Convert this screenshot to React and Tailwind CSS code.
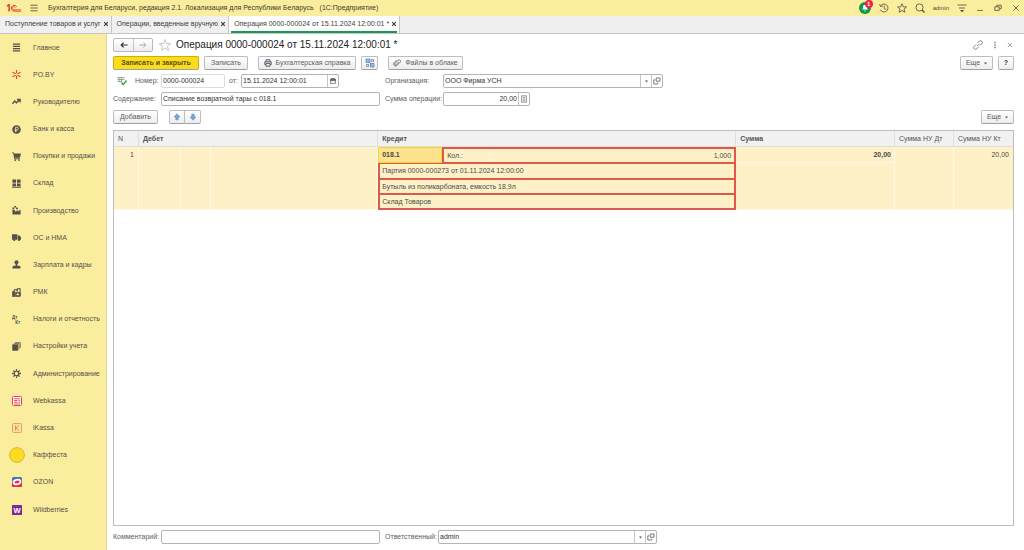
import clsx from 'clsx'

const Svg = ({ size = 'w-2.5 h-2.5', className, children, ...rest }) => (
  <svg viewBox="0 0 20 20" className={clsx(size, 'shrink-0', className)} fill="none" stroke="currentColor" strokeWidth="1.6" aria-hidden="true" {...rest}>
    {children}
  </svg>
)

const icons = {
  main: <g stroke="none" fill="currentColor"><path d="M2 1h16v3H2zM2 6h16v3H2zM2 11h16v3H2zM2 16h16v3H2z" /></g>,
  poby: (
    <g stroke="#e0432f" strokeWidth="2.4">
      <path d="M10 0v7M10 13v7M1 5l7 3.500M19 5l-7 3.500M1 15l7-3.500M19 15l-7-3.500" />
    </g>
  ),
  chart: <path d="M1 15l5-6 4 4 7-7M11 5.5h7V12" strokeWidth="3" />,
  bank: (
    <g>
      <circle cx="10" cy="10" r="9.5" fill="currentColor" stroke="none" />
      <path d="M8 15.5V5h3.2a2.8 2.8 0 0 1 0 5.8H6M6 13.2h5.5" stroke="#fbed9e" strokeWidth="1.8" />
    </g>
  ),
  cart: (
    <g fill="currentColor" stroke="none">
      <path d="M0 1h4l.8 2.500H20l-2.400 9H6.400l.5 1.500H17.500v2H5.300L2.600 3H0z" />
      <circle cx="7.2" cy="18" r="2" />
      <circle cx="15.500" cy="18" r="2" />
    </g>
  ),
  stock: (
    <g fill="currentColor" stroke="none">
      <path d="M1 1h8v7.500H1zM11 1h8v7.500h-8zM1 9.800h8V16H1zM11 9.800h8V16h-8zM0 17h20v2.500H0z" />
    </g>
  ),
  factory: (
    <g fill="currentColor" stroke="none">
      <path d="M1 19V9h5l1.500 3.500L13 9v3.500L19 8v11z" />
      <path d="M1 3.500h4V7.500H1zM5 0h4v3.500H5zM9 3.500h4V7H9z" />
    </g>
  ),
  truck: (
    <g fill="currentColor" stroke="none">
      <path d="M0 3h12v12H0zM13 5.500h4l3 4V15h-7z" />
      <circle cx="5" cy="15.500" r="2.500" />
      <circle cx="15.500" cy="15.500" r="2.500" />
    </g>
  ),
  person: (
    <g fill="currentColor" stroke="none">
      <circle cx="10" cy="5" r="4.500" />
      <path d="M8 8h4v5h5l2 2.500V19H1v-3.500L3 13h5z" />
    </g>
  ),
  rmk: (
    <g>
      <path d="M1 8h5.500v11H1zM8 10h10v9H8z" fill="currentColor" />
      <path d="M5 8V4h6v4M12 7V1.800h6V18" strokeWidth="2.400" />
      <path d="M10 12.500h5.500v3.500H10z" fill="#fbed9e" stroke="none" />
    </g>
  ),
  tax: (
    <g fill="currentColor" stroke="none" className="font-bold">
      <text x="0" y="9" fontSize="10">Дт</text>
      <text x="7" y="19" fontSize="10">Кт</text>
    </g>
  ),
  books: (
    <g>
      <path d="M1.500 6h11.500v12.500h-11.500z" fill="currentColor" />
      <path d="M4 3.500h11.500v12.500M7 1.300h11.500v12" strokeWidth="1.600" />
    </g>
  ),
  gear: (
    <g>
      <circle cx="10" cy="10" r="5" strokeWidth="2.600" />
      <path d="M10 0v4M10 16v4M0 10h4M16 10h4M3 3l3 3M14 14l3 3M17 3l-3 3M6 14l-3 3" strokeWidth="2.800" />
    </g>
  ),
  webkassa: (
    <g stroke="#ee3c50">
      <rect x="1" y="1" width="18" height="18" rx="2" fill="#fff" strokeWidth="2" />
      <path d="M4 5.500h12M4 9h7M4 12.500h7M4 16h12M13 9h3M13 12.500h3" strokeWidth="1.800" />
    </g>
  ),
  ikassa: (
    <g>
      <rect x="1" y="1" width="18" height="18" rx="2" stroke="#e58a5e" strokeWidth="1.600" fill="#fbe39a" />
      <path d="M7 5v10M13.500 5L8 10l5.500 5" stroke="#e07a52" />
    </g>
  ),
  kaffesta: <circle cx="10" cy="10" r="9.200" fill="#fbdc1f" stroke="#d3a52a" strokeWidth="1" />,
  ozon: (
    <g>
      <rect width="20" height="20" rx="3" fill="#4a6fae" stroke="none" />
      <path d="M0 15l20-4v7a2 2 0 0 1-2 2H2a2 2 0 0 1-2-2z" fill="#ee2b48" stroke="none" />
      <ellipse cx="10" cy="10" rx="7" ry="4.500" transform="rotate(-12 10 10)" stroke="#fff" strokeWidth="3.500" fill="#ee2b48" />
    </g>
  ),
  wb: (
    <g>
      <rect width="20" height="20" rx="1" fill="#7d2a93" stroke="none" />
      <text x="10" y="15.500" fontSize="15" textAnchor="middle" fill="#fff" stroke="none" className="font-bold">W</text>
    </g>
  ),
}

const sections = [
  { icon: 'main', label: 'Главное' },
  { icon: 'poby', label: 'PO.BY' },
  { icon: 'chart', label: 'Руководителю' },
  { icon: 'bank', label: 'Банк и касса' },
  { icon: 'cart', label: 'Покупки и продажи' },
  { icon: 'stock', label: 'Склад' },
  { icon: 'factory', label: 'Производство' },
  { icon: 'truck', label: 'ОС и НМА' },
  { icon: 'person', label: 'Зарплата и кадры' },
  { icon: 'rmk', label: 'РМК' },
  { icon: 'tax', label: 'Налоги и отчетность' },
  { icon: 'books', label: 'Настройки учета' },
  { icon: 'gear', label: 'Администрирование' },
  { icon: 'webkassa', label: 'Webkassa', size: 'w-2.5 h-2.5' },
  { icon: 'ikassa', label: 'iKassa', size: 'w-2.5 h-2.5' },
  { icon: 'kaffesta', label: 'Каффеста', size: 'w-4 h-4' },
  { icon: 'ozon', label: 'OZON', size: 'w-2.5 h-2.5' },
  { icon: 'wb', label: 'Wildberries', size: 'w-2.5 h-2.5' },
]

const tabs = [
  { label: 'Поступление товаров и услуг' },
  { label: 'Операции, введенные вручную' },
  { label: 'Операция 0000-000024 от 15.11.2024 12:00:01 *', active: true },
]

const Caret = () => (
  <svg viewBox="0 0 6 4" className="w-[3px] h-[3px] shrink-0" fill="currentColor" aria-hidden="true">
    <path d="M0 0h6L3 4z" />
  </svg>
)

const OpenIcon = () => (
  <Svg size="w-2 h-2">
    <path d="M8 2.500h9.500v8H8zM5 7H2v10.500h10V14" strokeWidth="2" />
  </Svg>
)

const Button = ({ className, children, ...rest }) => (
  <button
    type="button"
    className={clsx('h-3.5 shrink-0 flex items-center justify-center gap-1 border border-[#bdbdbd] border-b-[#a0a0a0] rounded-[2px] bg-gradient-to-b from-white to-[#ededed] whitespace-nowrap', className)}
    {...rest}
  >
    {children}
  </button>
)

const Field = ({ id, label, labelClass, className, children, boxClass, inputClass, ...rest }) => (
  <div className={clsx('flex items-center', className)}>
    <label htmlFor={id} className={clsx('shrink-0 whitespace-nowrap', labelClass)}>{label}</label>
    <div className={clsx('h-3.5 flex items-stretch border border-[#b4b4b4] rounded-[2px] bg-white min-w-0', boxClass)}>
      <input id={id} className={clsx('flex-1 w-full min-w-0 px-px outline-none text-[#333]', inputClass)} {...rest} />
      {children}
    </div>
  </div>
)

const FieldButton = ({ label, children }) => (
  <button type="button" aria-label={label} className="w-[11px] shrink-0 flex items-center justify-center border-l border-[#c4c4c4]">
    {children}
  </button>
)

const WindowButton = ({ label, children }) => (
  <button type="button" aria-label={label} className="w-2.5 flex justify-center">
    <Svg size="w-2 h-2">{children}</Svg>
  </button>
)

const TitleBar = () => (
  <header className="h-4 shrink-0 flex items-center bg-[#fbed9e] pl-1.5 pr-[3px] text-[#4d4a3c]">
    <svg viewBox="0 0 34 18" className="w-4 h-2 shrink-0" fill="none" stroke="#dc2a20" strokeWidth="2" aria-label="1C">
      <path d="M1 5l5-3.500V17M3.500 7v-.5" strokeWidth="3" />
      <path d="M23 6a6.500 6.500 0 1 0-6 10h16" />
      <path d="M20 8a3.500 3.500 0 1 0-3.500 5H33" strokeWidth="1.600" />
    </svg>
    <button type="button" aria-label="Меню" className="ml-2">
      <Svg size="w-2 h-2"><path d="M1 3h18M1 10h18M1 17h18" strokeWidth="2" /></Svg>
    </button>
    <h1 className="ml-[10px] flex-1 whitespace-nowrap text-[#3d3a2c]">
      Бухгалтерия для Беларуси, редакция 2.1. Локализация для Республики Беларусь <span className="ml-1">(1С:Предприятие)</span>
    </h1>
    <div className="flex items-center gap-2">
      <button type="button" aria-label="Уведомления" className="relative w-3 h-3 rounded-full bg-[#0f9650] flex items-center justify-center text-white">
        <Svg size="w-2 h-2"><path d="M2 14c3-2 3-4 3-7a5 5 0 0 1 10 0c0 3 0 5 3 7zM8 16h4v2H8z" fill="#fff" stroke="none" /></Svg>
        <span className="absolute -top-0.5 -right-0.5 w-2 h-2 rounded-full bg-[#f0243c] text-[6px] leading-[8px] font-bold">1</span>
      </button>
      <button type="button" aria-label="История">
        <Svg size="w-2.5 h-2.5"><path d="M3 6a8 8 0 1 1-.5 7M1 2.500L3 7l4.500-1M10.500 5v6l4 2" /></Svg>
      </button>
      <button type="button" aria-label="Избранное">
        <Svg size="w-2.5 h-2.5"><path d="M10 1.500l2.500 6 6.500.5-5 4.200 1.600 6.300-5.600-3.400-5.600 3.400L6 12.200 1 8l6.500-.5z" /></Svg>
      </button>
      <button type="button" aria-label="Поиск">
        <Svg size="w-2.5 h-2.5"><circle cx="9" cy="9" r="7.200" /><path d="M14 14l5 5" strokeWidth="2.400" /></Svg>
      </button>
      <a href="#user" className="text-[6px]">admin</a>
      <button type="button" aria-label="Настройки">
        <Svg size="w-2.5 h-2.5"><path d="M1 4h18M4 10h12" /><path d="M6 14h8l-4 4.500z" fill="currentColor" stroke="none" /></Svg>
      </button>
      <WindowButton label="Свернуть"><path d="M3 16h14" strokeWidth="2" /></WindowButton>
      <WindowButton label="Развернуть"><path d="M7 6V3h11v9h-4M2 7h11v9H2z" strokeWidth="2" /></WindowButton>
      <WindowButton label="Закрыть"><path d="M3 3l14 14M17 3L3 17" strokeWidth="2" /></WindowButton>
    </div>
  </header>
)

const TabBar = () => (
  <nav className="h-[18px] shrink-0 flex bg-[#f0f0f0] border-b border-[#c6c6c6]">
    {tabs.map((tab) => (
      <div key={tab.label} className={clsx('flex border-r border-[#c6c6c6] px-0.5', tab.active && 'bg-white')}>
        <div className={clsx('flex items-center gap-0.5 pl-[3px] border-b-2', tab.active ? 'border-[#159a54]' : 'border-transparent')}>
          <a href="#tab" className="whitespace-nowrap text-[#404040]">{tab.label}</a>
          <button type="button" aria-label="Закрыть вкладку" className="text-[#333]">
            <Svg size="w-1.5 h-1.5"><path d="M4 4l12 12M16 4L4 16" strokeWidth="3.400" /></Svg>
          </button>
        </div>
      </div>
    ))}
  </nav>
)

const Sidebar = () => (
  <aside className="w-[107px] shrink-0 flex flex-col bg-[#fbed9e] border-r border-[#e6d98c] pb-[27px] text-[#55504a]">
    {sections.map((item) => (
      <a key={item.label} href="#section" className="flex-1 flex items-center">
        <span className="w-[33px] flex justify-center">
          <Svg size={item.size || 'w-[9px] h-[9px]'}>{icons[item.icon]}</Svg>
        </span>
        <span className="whitespace-nowrap">{item.label}</span>
      </a>
    ))}
  </aside>
)

const cell = 'border-r border-b border-[#fff9e6]'

const EntriesTable = () => (
  <div className="flex-1 border border-[#bdbdbd] bg-white">
    <table className="w-full table-fixed border-separate border-spacing-0 text-left text-[#4a4a4a]">
      <colgroup>
        <col className="w-[25px]" />
        <col className="w-[42px]" />
        <col className="w-[30px]" />
        <col className="w-[18.600%]" />
        <col className="w-[64px]" />
        <col className="w-[32.700%]" />
        <col />
        <col className="w-[59px]" />
        <col className="w-[59px]" />
      </colgroup>
      <thead>
        <tr className="h-4 bg-[#f1f1f1] text-[#555]">
          <th className="border-r border-b border-[#dedede] px-1 font-normal">N</th>
          <th colSpan={3} className="border-r border-b border-[#dedede] px-1">Дебет</th>
          <th colSpan={2} className="border-r border-b border-[#dedede] px-1">Кредит</th>
          <th className="border-r border-b border-[#dedede] px-1">Сумма</th>
          <th className="border-r border-b border-[#dedede] px-1 font-normal whitespace-nowrap">Сумма НУ Дт</th>
          <th className="border-b border-[#dedede] px-1 font-normal whitespace-nowrap">Сумма НУ Кт</th>
        </tr>
      </thead>
      <tbody className="bg-[#fef1c8]">
        <tr className="h-4">
          <td rowSpan={4} className={clsx(cell, 'px-1 pt-[3px] text-right align-top')}>1</td>
          <td rowSpan={4} className={cell} />
          <td rowSpan={4} className={cell} />
          <td rowSpan={4} className={cell} />
          <td className="border border-[#f5d62e] bg-[#fde38e] px-[3px] font-bold">018.1</td>
          <td className="h-4 border-2 border-b border-[#da5a4c] p-0">
            <div className="flex items-center">
              <span className="w-[46px] border-r border-[#fff6dc] pl-[3px]">Кол.:</span>
              <span className="flex-1 pr-[3px] text-right">1,000</span>
            </div>
          </td>
          <td className={clsx(cell, 'px-[3px] text-right font-bold')}>20,00</td>
          <td rowSpan={4} className={cell} />
          <td rowSpan={4} className="border-b border-[#fff9e6] px-1 pt-[3px] text-right align-top">20,00</td>
        </tr>
        <tr className="h-4">
          <td colSpan={2} className="border-x-2 border-y border-[#da5a4c] px-0.5">Партия 0000-000273 от 01.11.2024 12:00:00</td>
          <td rowSpan={3} className={cell} />
        </tr>
        <tr className="h-[15px]">
          <td colSpan={2} className="border-x-2 border-y border-[#da5a4c] px-0.5">Бутыль из поликарбоната, емкость 18,9л</td>
        </tr>
        <tr className="h-4">
          <td colSpan={2} className="border-2 border-t border-[#da5a4c] px-0.5">Склад Товаров</td>
        </tr>
      </tbody>
    </table>
  </div>
)

const Document = () => (
  <main className="flex-1 min-w-0 flex flex-col pt-1 pb-1.5 pl-1.5 pr-2.5 text-[#5c5c5c]">
    <div className="flex items-center h-3.5">
      <div className="h-3.5 flex border border-[#b9b9b9] rounded-[2px] bg-gradient-to-b from-white to-[#ededed]">
        <button type="button" aria-label="Назад" className="w-[19px] flex items-center justify-center text-[#333]">
          <Svg size="w-2 h-2"><path d="M19 10H3M9 4l-6 6 6 6" strokeWidth="3" /></Svg>
        </button>
        <button type="button" aria-label="Вперед" className="w-[19px] flex items-center justify-center border-l border-[#c9c9c9] text-[#a5a5a5]">
          <Svg size="w-2 h-2"><path d="M1 10h16M11 4l6 6-6 6" strokeWidth="2.400" /></Svg>
        </button>
      </div>
      <button type="button" aria-label="В избранное" className="ml-1.5 text-[#b0b0b0]">
        <Svg size="w-3 h-3"><path d="M10 1l2.500 6.500 7 .3-5.500 4.300 2 6.900-6-4-6 4 2-6.900L.5 7.800l7-.3z" strokeWidth="1.200" /></Svg>
      </button>
      <h2 className="ml-[5px] flex-1 text-[10px] whitespace-nowrap text-[#222]">Операция 0000-000024 от 15.11.2024 12:00:01 *</h2>
      <div className="flex items-center gap-2 pr-px text-[#666]">
        <button type="button" aria-label="Ссылка">
          <Svg size="w-2.5 h-2.5"><path d="M8 12.500l5-5M9 6l3.500-3.500a3.500 3.500 0 0 1 5 5L14 11M11 14l-3.500 3.500a3.500 3.500 0 0 1-5-5L6 9" /></Svg>
        </button>
        <button type="button" aria-label="Еще действия">
          <Svg size="w-2 h-2"><path d="M8.500 2h3v3.500h-3zM8.500 8.200h3v3.500h-3zM8.500 14.500h3V18h-3z" fill="currentColor" stroke="none" /></Svg>
        </button>
        <button type="button" aria-label="Закрыть"><Svg size="w-1.5 h-1.5"><path d="M3 3l14 14M17 3L3 17" strokeWidth="2" /></Svg></button>
      </div>
    </div>

    {/* Command bar */}
    <div className="mt-1 flex items-center gap-[5px]">
      <Button className="w-[86px] font-bold text-[#57501f] border-[#d1ad00] bg-none bg-[#fbdc1b]">Записать и закрыть</Button>
      <Button className="w-11">Записать</Button>
      <Button className="ml-[5px] w-[98px]">
        <Svg size="w-2 h-2" className="text-[#4d5866]"><path d="M5 7V2h10v5M5 14H2V7h16v7h-3M5 11h10v7H5z" strokeWidth="2.400" /></Svg>
        Бухгалтерская справка
      </Button>
      <Button className="w-[17px] text-[#5b87b8]" aria-label="Структура подчиненности">
        <Svg size="w-2.5 h-2.5"><path d="M2 2h8v7H2zM11 11h7v7h-7z" fill="#9dbfe2" /><path d="M13 3h4v4h-4zM3 13h4v4H3zM7 7l6 6" /></Svg>
      </Button>
      <Button className="ml-[5px] w-[75px]">
        <Svg size="w-2 h-2"><path d="M15 7l-7 7a2 2 0 0 1-3-3l8-8a3.500 3.500 0 0 1 5 5l-8.500 8.500a5 5 0 0 1-7-7L9 3" strokeWidth="2" /></Svg>
        Файлы в облаке
      </Button>
      <Button className="ml-auto w-[33px]">Еще <Caret /></Button>
      <Button className="w-4 font-bold text-[#333]">?</Button>
    </div>

    {/* Header fields */}
    <div className="mt-1 grid grid-cols-[267px_1fr] gap-x-[5px] gap-y-1">
      <div className="flex items-center">
        <Svg size="w-2.5 h-2.5" className="ml-1 text-[#8a8a8a]">
          <path d="M1 3h14M1 7h14M1 11h9M4 3v8M9 3v8" />
          <path d="M9 13l3.500 4L19 9" stroke="#2fa04c" strokeWidth="2.600" />
        </Svg>
        <Field id="number" label="Номер:" labelClass="ml-2 w-[26px]" boxClass="w-16 border-[#dcdcdc]" defaultValue="0000-000024" />
        <Field id="date" label="от:" className="ml-1" labelClass="w-3" boxClass="w-[98px]" defaultValue="15.11.2024 12:00:01">
          <FieldButton label="Календарь">
            <Svg size="w-1.5 h-1.5"><path d="M2 4h16v14H2z" strokeWidth="2.400" /><path d="M2 4h16v5H2zM5 1h3v3H5zM12 1h3v3h-3z" fill="currentColor" /></Svg>
          </FieldButton>
        </Field>
      </div>
      <Field id="org" label="Организация:" labelClass="w-[58px]" boxClass="w-[220px]" defaultValue="ООО Фирма УСН">
        <FieldButton label="Выбрать"><Caret /></FieldButton>
        <FieldButton label="Открыть"><OpenIcon /></FieldButton>
      </Field>
      <Field id="content" label="Содержание:" labelClass="w-12" boxClass="flex-1" defaultValue="Списание возвратной тары с 018.1" />
      <Field id="total" label="Сумма операции:" labelClass="w-[58px]" boxClass="w-[87px]" inputClass="text-right" defaultValue="20,00">
        <FieldButton label="Калькулятор">
          <Svg size="w-2 h-2"><path d="M4 2h12v16H4zM7 6h6M7 10h6M7 14h6" /></Svg>
        </FieldButton>
      </Field>
    </div>

    <div className="mt-1 mb-1.5 flex items-center">
      <Button className="w-[45px]">Добавить</Button>
      <div className="ml-[11px] flex text-[#5f8fc9]">
        <Button className="w-4 rounded-r-none" aria-label="Вверх">
          <Svg size="w-2 h-2"><path d="M10 2l7 8h-4v7H7v-7H3z" fill="#7ba4d6" /></Svg>
        </Button>
        <Button className="w-4 rounded-l-none border-l-0" aria-label="Вниз">
          <Svg size="w-2 h-2"><path d="M10 18l7-8h-4V3H7v7H3z" fill="#7ba4d6" /></Svg>
        </Button>
      </div>
      <Button className="ml-auto w-[33px]">Еще <Caret /></Button>
    </div>

    <EntriesTable />

    <div className="mt-1 grid grid-cols-[267px_1fr] gap-x-[5px]">
      <Field id="comment" label="Комментарий:" labelClass="w-12" boxClass="flex-1" />
      <Field id="responsible" label="Ответственный:" labelClass="w-[53px]" boxClass="w-[219px]" defaultValue="admin">
        <FieldButton label="Выбрать"><Caret /></FieldButton>
        <FieldButton label="Открыть"><OpenIcon /></FieldButton>
      </Field>
    </div>
  </main>
)

const App = () => (
  <div className="min-h-screen flex flex-col bg-white font-['Liberation_Sans',sans-serif] text-[7px] leading-[10px]">
    <TitleBar />
    <TabBar />
    <div className="flex-1 flex">
      <Sidebar />
      <Document />
    </div>
  </div>
)

export default App
